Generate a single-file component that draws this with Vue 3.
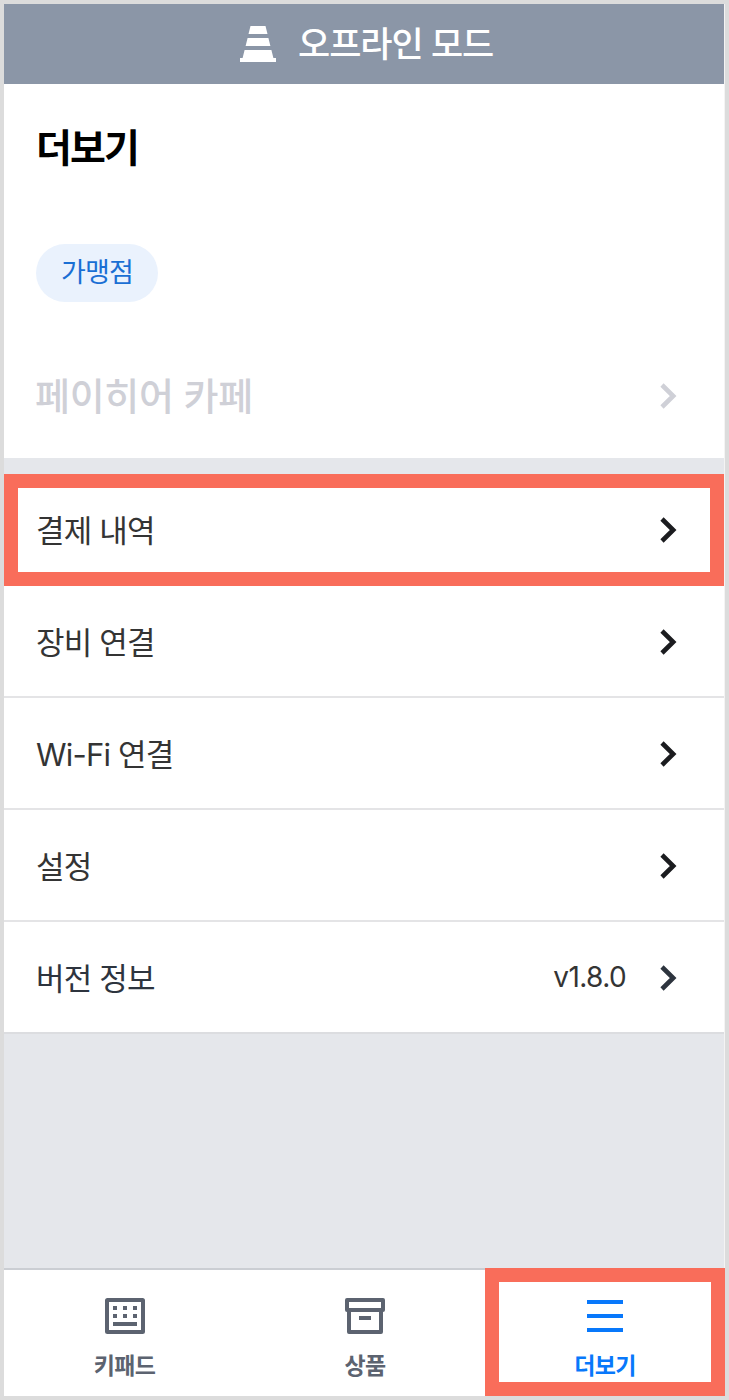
<script setup>
const items = [
  { label: '결제 내역', active: true },
  { label: '장비 연결' },
  { label: 'Wi-Fi 연결' },
  { label: '설정' },
  { label: '버전 정보', value: 'v1.8.0', slate: true },
]
</script>

<template>
  <div class="frame">
    <div class="screen">
      <header class="banner">
        <svg class="cone" width="36" height="36" viewBox="0 0 36 36" fill="#fff">
          <path d="M10.5 0h15l2 8h-19zM7.6 12h20.8l2 8H5.6zM4.6 24h26.8l2 8H36v4H0v-4h2.6z" />
        </svg>
        <span class="banner-text">오프라인 모드</span>
      </header>

      <section class="store">
        <h1 class="title">더보기</h1>
        <span class="chip"><span class="chip-text">가맹점</span></span>
        <div class="store-row">
          <span class="store-name">페이히어 카페</span>
          <svg class="chevron" width="18" height="26" viewBox="0 0 18 26"><path d="M2 2l11.2 11L2 24" /></svg>
        </div>
      </section>

      <ul class="menu">
        <li v-for="item in items" :key="item.label" class="item" :class="{ active: item.active, slate: item.slate }">
          <span class="label">{{ item.label }}</span>
          <span v-if="item.value" class="value">{{ item.value }}</span>
          <svg class="chevron" width="18" height="26" viewBox="0 0 18 26"><path d="M2 2l11.2 11L2 24" /></svg>
        </li>
      </ul>

      <nav class="tabs">
        <div class="tab">
          <svg width="40" height="36" viewBox="0 0 40 36" fill="currentColor">
            <rect x="2" y="2" width="36" height="32" rx="0.5" fill="none" stroke="currentColor" stroke-width="4" stroke-linejoin="round" />
            <path d="M8 8h4v4H8zM18 8h4v4h-4zM28 8h4v4h-4zM8 16h4v4H8zM18 16h4v4h-4zM28 16h4v4h-4zM8 24h24v4H8z" />
          </svg>
          <span class="tab-text">키패드</span>
        </div>
        <div class="tab">
          <svg width="40" height="36" viewBox="0 0 40 36" fill="none" stroke="currentColor" stroke-width="4" stroke-linejoin="round">
            <path d="M2 2h36v10H2zM4 12v22h32V12M14 20h12" />
          </svg>
          <span class="tab-text">상품</span>
        </div>
        <div class="tab current">
          <svg width="40" height="36" viewBox="0 0 40 36" fill="currentColor">
            <path d="M2 2h36v4H2zM2 16h36v4H2zM2 30h36v4H2z" />
          </svg>
          <span class="tab-text">더보기</span>
        </div>
      </nav>
    </div>
  </div>
</template>

<style>
body { background: #dcdcdc; }
</style>

<style scoped>
.frame {
  box-sizing: border-box;
  width: 729px;
  height: 1400px;
  padding: 4px;
  background: #dcdcdc;
  font-family: Inter, "Noto Sans CJK KR", sans-serif;
  overflow: hidden;
}
.screen {
  display: flex;
  flex-direction: column;
  width: 720px;
  height: 1392px;
  background: #e5e7eb;
  box-shadow: 1px 0 #f4f4f4;
}
.banner {
  display: flex;
  align-items: center;
  height: 80px;
  padding-left: 236px;
  background: #8b96a7;
  color: #fff;
}
.cone { margin-right: 22px; }
.banner-text {
  font-size: 35px;
  font-weight: 500;
  letter-spacing: -1.05px;
  line-height: 80px;
  white-space: nowrap;
}
.store {
  box-sizing: border-box;
  height: 374px;
  padding: 40px 46px 0 32px;
  background: #fff;
}
.title {
  margin: 0 0 72px;
  font-size: 39px;
  line-height: 48px;
  letter-spacing: -1.9px;
  font-weight: 700;
  color: #000;
}
.chip {
  display: flex;
  align-items: center;
  justify-content: center;
  width: 122px;
  height: 58px;
  border-radius: 29px;
  background: #eaf2fd;
  color: #1a6fd4;
}
.chip-text { font-size: 27px; line-height: 40px; letter-spacing: -0.8px; }
.store-row {
  display: flex;
  align-items: center;
  justify-content: space-between;
  height: 60px;
  margin-top: 64px;
  color: #cfd0d7;
}
.store-name { margin-left: -1px; font-size: 38px; line-height: 60px; font-weight: 500; letter-spacing: -0.3px; }
.menu { margin: 16px 0 0; padding: 0; list-style: none; }
.item {
  box-sizing: border-box;
  display: flex;
  align-items: center;
  height: 112px;
  padding: 2px 46px 0 32px;
  border-bottom: 2px solid #e4e4e6;
  background: #fff;
  color: #343434;
}
.item:last-child { border-bottom-color: #dcdde0; }
.item.active { padding: 0 32px 0 18px; border: 14px solid #f96d5a; }
.label { flex: 1; padding-top: 2px; font-size: 31px; line-height: 48px; letter-spacing: -0.8px; }
.value { margin-right: 34px; font-size: 28px; line-height: 40px; letter-spacing: -0.6px; padding-bottom: 2px; }
.chevron { flex: none; fill: none; stroke: currentColor; stroke-width: 4.6; }
.item .chevron { stroke: #1b1c1f; }
.slate .label { color: #2d343e; }
.item.slate .chevron { stroke: #2d343e; }
.tabs {
  display: flex;
  box-sizing: border-box;
  height: 128px;
  margin-top: auto;
  background: #fff;
}
.tab {
  flex: none;
  box-sizing: border-box;
  display: flex;
  flex-direction: column;
  align-items: center;
  width: 241px;
  height: 128px;
  padding-top: 28px;
  border-top: 2px solid #cbced3;
  color: #5c6370;
}
.tab + .tab { width: 240px; }
.tab svg { flex: none; }
.tab-text { margin-top: 12px; font-size: 23px; line-height: 40px; font-weight: 700; letter-spacing: -0.6px; }
.tab.current {
  padding-top: 16px;
  border: 14px solid #f96d5a;
  color: #0878fb;
}
</style>
